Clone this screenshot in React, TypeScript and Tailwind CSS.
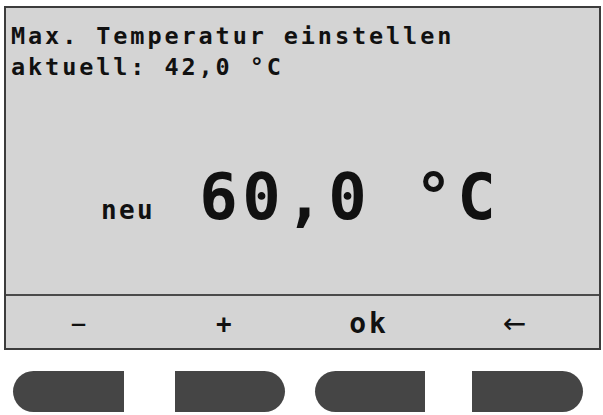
const mono = "font-['DejaVu_Sans_Mono','Liberation_Mono',monospace]";

const SoftKey = ({ side, className }: { side: "l" | "r"; className: string }) => (
  <div
    className={`h-[41px] bg-[#454545] ${side === "l" ? "rounded-l-[21px]" : "rounded-r-[21px]"} ${className}`}
  />
);

export default function App() {
  return (
    <div className="w-[603px] h-[415px] bg-white pt-[6px] overflow-hidden">
      {/* display */}
      <div className="ml-[4px] w-[597px] h-[344px] border-2 border-[#3c3c3c] bg-[#d4d4d4] flex flex-col text-[#111]">
        <div className="h-[288px] border-b-2 border-[#4a4a4a] flex flex-col">
          <div className={`${mono} pl-[5px] pt-[13px] text-[23.5px] leading-[31px] font-bold tracking-[2.9px]`}>
            <div>Max. Temperatur einstellen</div>
            <div>aktuell: 42,0 °C</div>
          </div>
          <div className={`${mono} mt-[82px] pl-[95px] flex items-baseline font-bold`}>
            <span className="text-[26px] tracking-[2.4px] leading-none">neu</span>
            <span className="ml-[44px] text-[64px] leading-[64px] tracking-[4.5px] whitespace-pre">60,0 °C</span>
          </div>
        </div>
        <div className="flex-1 grid grid-cols-4 pr-[12px] pt-[3px] items-center text-center">
          <span className={`${mono} text-[26px] leading-none`}>−</span>
          <span className={`${mono} text-[26px] leading-none font-bold`}>+</span>
          <span className={`${mono} text-[28px] leading-none font-bold tracking-[3px]`}>ok</span>
          <span className="font-['DejaVu_Sans',sans-serif] text-[28px] leading-none">←</span>
        </div>
      </div>
      {/* hardware keys */}
      <div className="mt-[21px] pl-[13px] flex">
        <SoftKey side="l" className="w-[111px]" />
        <SoftKey side="r" className="ml-[51px] w-[110px]" />
        <SoftKey side="l" className="ml-[30px] w-[110px]" />
        <SoftKey side="r" className="ml-[47px] w-[111px]" />
      </div>
    </div>
  );
}
